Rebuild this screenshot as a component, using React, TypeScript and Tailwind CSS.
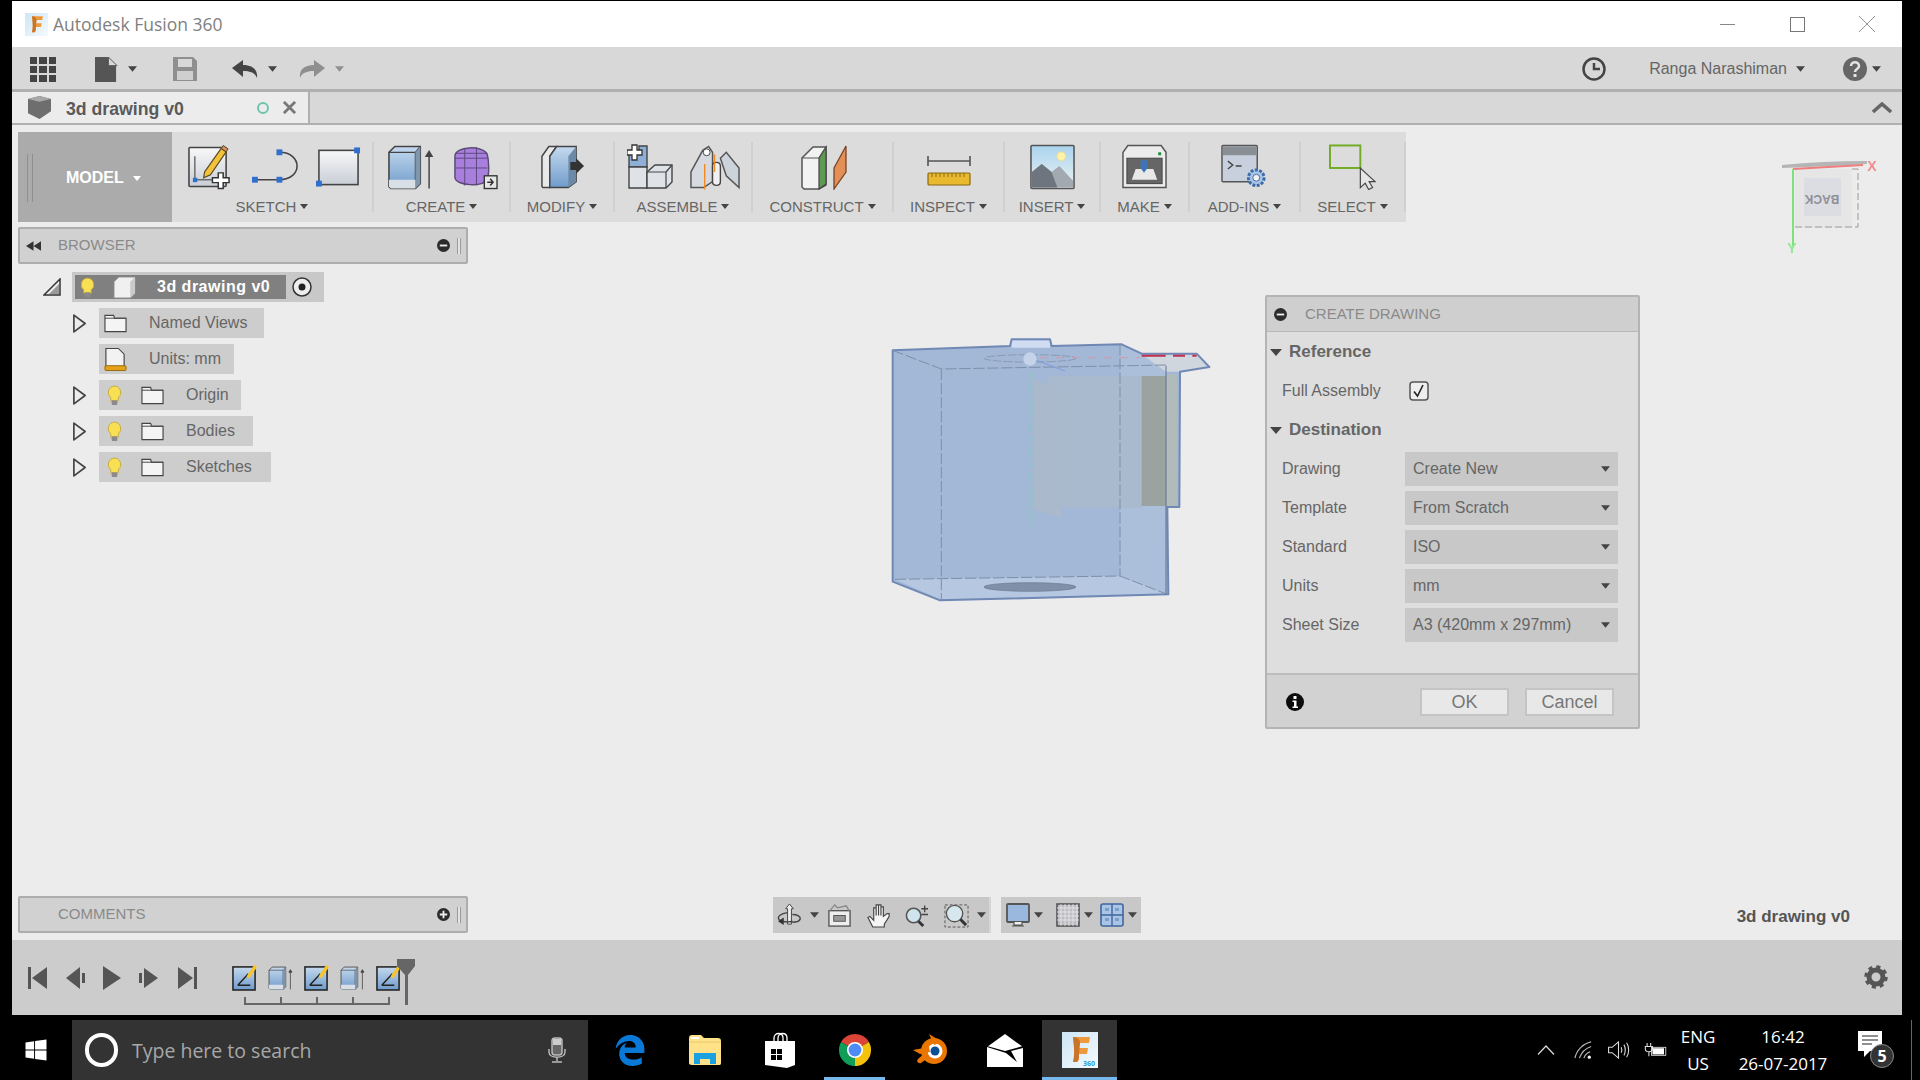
import { FaEdgeLegacy, FaWindows } from "react-icons/fa";

const Caret = ({ className = "w-[9px] h-[6px] text-[#555]" }: { className?: string }) => (
  <svg viewBox="0 0 10 6" className={className}>
    <path d="M0 0h10L5 6z" fill="currentColor" />
  </svg>
);

const Defs = () => (
  <svg className="absolute w-0 h-0">
    <defs>
      <linearGradient id="blue" x1="0" y1="0" x2="0" y2="1">
        <stop offset="0" stopColor="#c5d9ee" />
        <stop offset="1" stopColor="#6f9ccb" />
      </linearGradient>
      <linearGradient id="paper" x1="0" y1="0" x2="0" y2="1">
        <stop offset="0" stopColor="#f8f8f8" />
        <stop offset="1" stopColor="#c9ced6" />
      </linearGradient>
      <linearGradient id="sky" x1="0" y1="0" x2="0" y2="1">
        <stop offset="0" stopColor="#a9d3ee" />
        <stop offset="1" stopColor="#eef3f2" />
      </linearGradient>
      <linearGradient id="fusion" x1="0" y1="0" x2="1" y2="1">
        <stop offset="0" stopColor="#cde6f6" />
        <stop offset="1" stopColor="#f5fafd" />
      </linearGradient>
    </defs>
  </svg>
);

const SketchIcon = () => (
  <svg viewBox="0 0 44 46" className="w-[43px] h-[46px]">
    <rect x="1" y="3" width="38" height="40" rx="1" fill="url(#paper)" stroke="#444" strokeWidth="1.6" />
    <path d="M7 36h26M7 36V12" stroke="#6b6b6b" strokeWidth="1.5" fill="none" />
    <rect x="5" y="34" width="4.5" height="4.5" fill="#2f6fd0" />
    <path d="M17 28 34 4l5 3.5L23 31l-7 3z" fill="#f2c23c" stroke="#5a4a20" strokeWidth="1.2" />
    <path d="m34 4 5 3.5 2-3-5-3.5z" fill="#d98c5f" stroke="#5a4a20" strokeWidth="1" />
    <path d="M31 29h5v5h6v5h-6v6h-5v-6h-6v-5h6z" fill="#fff" stroke="#333" strokeWidth="1.5" />
  </svg>
);

const LineIcon = () => (
  <svg viewBox="0 0 48 46" className="w-[47px] h-[46px]">
    <path d="M3 36h26M28 8c24 0 24 28 0 28" stroke="#444" strokeWidth="1.6" fill="none" />
    <rect x="0" y="33" width="6" height="6" fill="#2f6fd0" />
    <rect x="25" y="33" width="6" height="6" fill="#2f6fd0" />
    <rect x="25" y="5" width="6" height="6" fill="#2f6fd0" />
  </svg>
);

const RectIcon = () => (
  <svg viewBox="0 0 46 46" className="w-[45px] h-[46px]">
    <rect x="3" y="6" width="40" height="35" fill="url(#paper)" stroke="#444" strokeWidth="1.6" />
    <rect x="39" y="3" width="6" height="6" fill="#2f6fd0" />
    <rect x="0" y="37" width="6" height="6" fill="#2f6fd0" />
  </svg>
);

const ExtrudeIcon = ({ small = false }: { small?: boolean }) => (
  <svg viewBox="0 0 48 46" className={small ? "w-[25px] h-[24px]" : "w-[47px] h-[46px]"}>
    <path d="M2 8 8 2h26v38l-5 5H4l-2-2z" fill="url(#blue)" stroke="#444" strokeWidth="1.6" />
    <path d="M29 8h-27M29 8l5-6M29 8v37" stroke="#444" strokeWidth="1.3" fill="none" />
    <path d="M29 8l5-6v38l-5 5z" fill="#7f96ad" />
    <path d="M2 36h27v9H4l-2-2z" fill="#d9dfe6" />
    <path d="M43 45V8M40 12l3-5 3 5z" stroke="#444" strokeWidth="1.5" fill="#444" />
  </svg>
);

const FormIcon = () => (
  <svg viewBox="0 0 46 46" className="w-[45px] h-[46px]">
    <path d="M2 12C2 2 30 0 35 10c2 8 2 20 0 26-5 8-32 6-33-2z" fill="#a87fdc" stroke="#5a4a74" strokeWidth="1.5" />
    <path d="M2 14h33M2 24h33M12 4v38M24 3v39M2 9h33" stroke="#5c4a80" strokeWidth="1" fill="none" />
    <rect x="32" y="32" width="13" height="13" fill="#e6e6e6" stroke="#333" strokeWidth="1.4" />
    <path d="M35 38.500h5M38 35l3 3.500-3 3.500" stroke="#333" strokeWidth="1.5" fill="none" />
  </svg>
);

const ModifyIcon = () => (
  <svg viewBox="0 0 46 46" className="w-[45px] h-[46px]">
    <path d="M2 12 9 2h8l-7 10v32H3l-1-1z" fill="#e8e8e8" stroke="#444" strokeWidth="1.5" />
    <path d="M10 12 17 2h20v36l-8 6H10z" fill="url(#blue)" stroke="#444" strokeWidth="1.5" />
    <path d="M29 12v32l8-6V2z" fill="#6c8aa8" />
    <path d="M31 18h6v-4l8 8-8 8v-4h-6z" fill="#333" />
  </svg>
);

const AssembleIcon = () => (
  <svg viewBox="0 0 46 46" className="w-[46px] h-[46px]">
    <path d="M12 2h8v21H2V10h10z" fill="#8fb0d6" stroke="#444" strokeWidth="1.4" />
    <path d="M2 23h18v21H2z" fill="#dfe3e8" stroke="#444" strokeWidth="1.4" />
    <path d="M20 28l8-7h17v17l-6 6H20z" fill="#dfe3e8" stroke="#444" strokeWidth="1.4" />
    <path d="M20 28h19v16M39 28l6-7" stroke="#444" strokeWidth="1.2" fill="none" />
    <path d="M5 1h5v5h5v5h-5v5H5v-5H0V6h5z" fill="#fff" stroke="#333" strokeWidth="1.3" />
  </svg>
);

const JointIcon = () => (
  <svg viewBox="0 0 52 46" className="w-[51px] h-[46px]">
    <path d="M2 28 14 6l6-4 4 6v30l-9 6H2z" fill="#d6dae0" stroke="#555" strokeWidth="1.5" />
    <circle cx="18" cy="8" r="3.500" fill="#fff" stroke="#444" />
    <path d="M24 22c0-5 8-5 8 0v16c0 5-8 5-8 0z" fill="#f0f0f0" stroke="#444" strokeWidth="1.4" />
    <path d="M32 14 38 8l13 16v20L38 32z" fill="#cdd3da" stroke="#555" strokeWidth="1.5" />
    <path d="M26 10v18M16 20v26" stroke="#f08a24" strokeWidth="1.4" />
  </svg>
);

const ConstructIcon = () => (
  <svg viewBox="0 0 46 46" className="ml-[3px] w-[46px] h-[46px]">
    <path d="M1 14 12 3h13v38l-7 4H3l-2-2z" fill="#f2f2f2" stroke="#555" strokeWidth="1.5" />
    <path d="M18 14v31l7-5V3z" fill="#5f9a55" stroke="#444" strokeWidth="1.2" />
    <path d="M1 14h17l7-11" stroke="#555" strokeWidth="1.2" fill="none" />
    <path d="M33 24 45 2v26L33 45z" fill="#e39058" stroke="#7a4424" strokeWidth="1.3" />
  </svg>
);

const InspectIcon = () => (
  <svg viewBox="0 0 44 46" className="w-[44px] h-[46px]">
    <path d="M1 17h42M1 12v10M43 12v10" stroke="#555" strokeWidth="1.6" fill="none" />
    <rect x="1" y="29" width="42" height="12" rx="1" fill="#e9b92f" stroke="#8a6a14" strokeWidth="1.2" />
    <path d="M5 29v4M9 29v4M13 29v4M17 29v4M21 29v4M25 29v4M29 29v4M33 29v4M37 29v4" stroke="#8a6a14" strokeWidth="1" />
  </svg>
);

const InsertIcon = () => (
  <svg viewBox="0 0 46 46" className="w-[45px] h-[46px]">
    <rect x="1" y="1" width="44" height="44" rx="1" fill="url(#sky)" stroke="#555" strokeWidth="1.6" />
    <circle cx="32" cy="12" r="4.500" fill="#fdf2a8" stroke="#f2dc88" />
    <path d="M2 44V28l10-8 10 8 8-6 14 15v7z" fill="#a3a9b0" />
    <path d="M2 44V28l10-8 10 8 6 16z" fill="#6f757e" />
  </svg>
);

const MakeIcon = () => (
  <svg viewBox="0 0 46 46" className="w-[45px] h-[46px]">
    <path d="M1 8 6 1h34l5 7v36H1z" fill="#ececec" stroke="#555" strokeWidth="1.5" />
    <rect x="5" y="14" width="36" height="26" fill="#666" stroke="#444" />
    <path d="M10 36 14 25h18l4 11z" fill="#e8e8e8" />
    <path d="M19 16h7v8l-3.500 5-3.500-5z" fill="#3f74b8" />
    <rect x="37" y="8" width="3" height="3" fill="#1c8a3a" />
  </svg>
);

const AddinsIcon = () => (
  <svg viewBox="0 0 48 46" className="w-[47px] h-[46px]">
    <rect x="1" y="1" width="36" height="37" rx="1" fill="#c7d0dc" stroke="#555" strokeWidth="1.5" />
    <rect x="2" y="2" width="34" height="9" fill="#8a8f96" />
    <path d="M7 17l5 4-5 4M15 22h6" stroke="#444" strokeWidth="1.4" fill="none" />
    <circle cx="36" cy="34" r="8" fill="#a8c4e6" stroke="#3d6ba8" strokeWidth="3" strokeDasharray="3 1.500" />
    <circle cx="36" cy="34" r="3.500" fill="#f4f4f4" stroke="#3d6ba8" />
  </svg>
);

const SelectIcon = () => (
  <svg viewBox="0 0 48 46" className="w-[47px] h-[46px]">
    <rect x="1" y="1" width="31" height="23" fill="none" stroke="#72ac25" strokeWidth="2" />
    <path d="M32 24v20l5-4.500 3.500 6.500 4-2-3.500-6H47z" fill="#e6e6e6" stroke="#444" strokeWidth="1.2" />
  </svg>
);

const Group = ({ label, className, children }: { label: string; className: string; children: React.ReactNode }) => (
  <div className={`h-[70px] mt-[10px] flex flex-col items-center border-r-2 border-[#d0d0d0] ${className}`}>
    <div className="h-[46px] mt-[2px] flex items-center justify-center">{children}</div>
    <div className="mt-[9px] flex items-center gap-[4px] text-[15px] leading-[15px] text-[#666]">
      {label}
      <Caret className="w-[8px] h-[5px] text-[#444]" />
    </div>
  </div>
);

const Bulb = ({ className = "" }: { className?: string }) => (
  <svg viewBox="0 0 16 22" className={`w-[15px] h-[21px] shrink-0 ${className}`}>
    <path d="M8 1a7 7 0 0 0-4 12.500V17h8v-3.500A7 7 0 0 0 8 1z" fill="#f7e053" stroke="#c7a93a" />
    <rect x="5" y="16" width="6" height="5" rx="1" fill="#8a8a8a" />
  </svg>
);

const Folder = ({ className = "" }: { className?: string }) => (
  <svg viewBox="0 0 24 20" className={`w-[23px] h-[20px] shrink-0 ${className}`}>
    <path d="M1 2h9l1 3h12v14H1z" fill="#f4f4f4" stroke="#444" strokeWidth="1.2" />
    <path d="M1 5h22" stroke="#444" strokeWidth="1" />
  </svg>
);

const TreeArrow = () => (
  <svg viewBox="0 0 16 22" className="w-[15px] h-[21px]">
    <path d="M2 2 14 11 2 20z" fill="none" stroke="#444" strokeWidth="1.8" strokeLinejoin="round" />
  </svg>
);

const CircleSign = ({ plus = false }: { plus?: boolean }) => (
  <svg viewBox="0 0 14 14" className="w-[13px] h-[13px]">
    <circle cx="7" cy="7" r="7" fill="#2c2c2c" />
    <path d={plus ? "M3 7h8M7 3v8" : "M3 7h8"} stroke="#eee" strokeWidth="2" />
  </svg>
);

const Grip = () => (
  <div className="ml-[7px] w-[4px] h-[16px] border-x border-[#9a9a9a] bg-[#e4e4e4]" />
);

const Panel = ({ title, children, right }: { title: string; children?: React.ReactNode; right: React.ReactNode }) => (
  <div className="w-[450px] h-[37px] flex items-center bg-[#d1d1d1] border-2 border-[#adadad] rounded-[2px]">
    <div className="w-[38px] pl-[6px] flex items-center">{children}</div>
    <div className="text-[15px] text-[#8a8a8a]">{title}</div>
    <div className="ml-auto mr-[5px] flex items-center">{right}<Grip /></div>
  </div>
);

const TreeRow = ({ label, arrow = true, bulb = true, doc = false, className }: { label: string; arrow?: boolean; bulb?: boolean; doc?: boolean; className: string }) => (
  <div className="flex items-center h-[30px] ml-[54px]">
    <div className="w-[27px]">{arrow && <TreeArrow />}</div>
    <div className={`h-[30px] flex items-center bg-[#cdcdcd] text-[16px] text-[#666] ${className}`}>
      {bulb && <Bulb className="ml-[8px] mr-[19px]" />}
      {doc ? (
        <svg viewBox="0 0 24 24" className="w-[23px] h-[24px] ml-[5px] shrink-0">
          <path d="M2 20V1h13l6 6v13z" fill="#f2f2f2" stroke="#444" strokeWidth="1.2" />
          <rect x="1" y="19" width="22" height="5" rx="1" fill="#e3a21a" stroke="#96680c" />
        </svg>
      ) : (
        <Folder className={bulb ? "" : "ml-[5px]"} />
      )}
      <span className="ml-[22px]">{label}</span>
    </div>
  </div>
);

const Field = ({ label, value }: { label: string; value: string }) => (
  <div className="flex items-center h-[34px] mb-[5px]">
    <div className="w-[138px] pl-[15px] text-[16px] text-[#666]">{label}</div>
    <div className="w-[213px] h-[34px] pl-[8px] pr-[8px] flex items-center justify-between bg-[#c8c8c8] text-[16px] text-[#666]">
      {value}
      <Caret className="w-[9px] h-[6px] text-[#444]" />
    </div>
  </div>
);

const SectionTitle = ({ label }: { label: string }) => (
  <div className="flex items-center h-[22px] pl-[3px] gap-[7px] text-[17px] font-bold text-[#666]">
    <Caret className="w-[12px] h-[9px] text-[#444]" />
    {label}
  </div>
);

const Model = () => (
  <svg viewBox="0 0 1110 900" className="absolute left-[848px] top-[186px] w-[370px] h-[300px] blur-[0.4px]">
    <path d="M98 118 450 105 455 85H570L575 105 785 100 845 128H1010L1048 168 960 182 958 588H922L925 850 240 868 98 812Z" fill="#a3b8d6" />
    <path d="M780 100 918 165V850L780 795Z" fill="#abbfdb" />
    <path d="M105 805 780 795 922 850 240 865Z" fill="#b6c8e1" />
    <path d="M455 88H570V110H455Z" fill="#cfdcf2" />
    <path d="M845 130H1010L1048 168 960 182H918Z" fill="#cfd6de" />
    <path d="M565 195H845V590H565Z" fill="#a9bacf" />
    <path d="M520 205 605 235V622L520 595Z" fill="#aabacc" />
    <path d="M845 195H918V585H845Z" fill="#9aa3a0" />
    <path d="M918 190H952V585H918Z" fill="#b2bbbb" />
    <path d="M98 118 450 105 455 85H570L575 105 785 100 845 128H1010L1048 168 960 182 958 588H922L925 850 240 868 98 812Z" fill="none" stroke="#7088b4" strokeWidth="6" strokeLinejoin="round" />
    <path d="M98 118 244 174 918 162M244 174V865M780 100V795M105 805 780 795 922 850" fill="none" stroke="#7d8fa8" strokeWidth="3" strokeDasharray="34 8" />
    <path d="M918 165V850" stroke="#5f7190" strokeWidth="3" />
    <path d="M512 180V645" stroke="#8dc4bd" strokeWidth="3" strokeDasharray="30 8" />
    <ellipse cx="510" cy="142" rx="138" ry="11" fill="none" stroke="#8493ab" strokeWidth="2.500" strokeDasharray="26 6" />
    <circle cx="510" cy="144" r="20" fill="#c4d2ea" />
    <path d="M530 148 615 180" stroke="#7f9ce0" strokeWidth="3" />
    <path d="M540 140H840" stroke="#d39aa8" strokeWidth="3" strokeDasharray="24 24" />
    <path d="M845 134H1010" stroke="#c0304f" strokeWidth="6" strokeDasharray="72 22 36 22" />
    <ellipse cx="510" cy="828" rx="138" ry="13" fill="#7f90a8" stroke="#66758e" strokeWidth="2" />
  </svg>
);

const ViewCube = () => (
  <svg viewBox="0 0 420 270" className="absolute left-[1488px] top-[-124px] w-[420px] h-[270px] blur-[0.5px]">
    <path d="M282 164q40-4 85-4v3q-30 2-85 4z" fill="#b5b5b5" />
    <rect x="295" y="168" width="57" height="59" fill="#e6e6e6" />
    <rect x="304" y="177" width="37" height="38" fill="#dcdde2" />
    <text x="322" y="197" transform="rotate(180 322 197)" textAnchor="middle" dominantBaseline="middle" fontSize="12" fontWeight="700" fill="#8f8f96">BACK</text>
    <path d="M352 168h6v58h-64" fill="none" stroke="#9a9a9a" strokeWidth="1" strokeDasharray="7 3" />
    <path d="M293 168 363 164" stroke="#ef7e7e" strokeWidth="2" />
    <path d="M293 168V245" stroke="#7fe07f" strokeWidth="2" />
    <text x="372" y="170" textAnchor="middle" fontSize="14" fontWeight="700" fill="#f28b8b">X</text>
    <text x="292" y="252" textAnchor="middle" fontSize="14" fontWeight="700" fill="#93e893">Y</text>
  </svg>
);

const NavBar = () => (
  <div className="absolute left-[761px] top-[772px] flex items-center h-[36px] gap-[10px]">
    <div className="w-[218px] h-[36px] bg-[#c8c8c8] flex items-center pl-[4px] border-r-2 border-[#d6d6d6]">
      <svg viewBox="0 0 26 26" className="w-[25px] h-[25px]">
        <path d="M13 1 9 6h2v16h4V6h2z" fill="#eee" stroke="#444" />
        <path d="M11 10C4 11 0 14 2 17s10 3 14 2M16 12c5 0 9 2 8 5-1 2-5 3-8 3" fill="none" stroke="#444" strokeWidth="1.400" />
        <path d="m1 19 6-4v8z" fill="#333" />
      </svg>
      <Caret className="ml-[8px] w-[9px] h-[6px] text-[#444]" />
      <svg viewBox="0 0 26 26" className="ml-[8px] w-[25px] h-[25px]">
        <rect x="2" y="8" width="22" height="16" fill="#eee" stroke="#555" strokeWidth="1.400" />
        <rect x="7" y="13" width="12" height="6" fill="#999" stroke="#555" />
        <path d="M3 8 8 2l3 3 9-2 3 5" fill="none" stroke="#888" strokeWidth="1.400" />
      </svg>
      <svg viewBox="0 0 26 26" className="ml-[15px] w-[25px] h-[25px]">
        <path d="M6 25 1 15l2-1 4 4V5h2.500v8V2H12v11V2h2.500v11V4H17v10l4-3h2v3l-5 8v3z" fill="#f4f4f4" stroke="#444" strokeWidth="1.200" />
      </svg>
      <svg viewBox="0 0 26 26" className="ml-[12px] w-[25px] h-[25px]">
        <circle cx="10" cy="13" r="7.500" fill="#cfe4ec" stroke="#555" strokeWidth="1.600" />
        <path d="m15 19 5 5" stroke="#333" strokeWidth="3" />
        <path d="M18 6h7M21.500 2.500v7M18 12h7" stroke="#444" strokeWidth="1.400" />
      </svg>
      <svg viewBox="0 0 26 26" className="ml-[15px] w-[25px] h-[25px]">
        <rect x="1" y="2" width="24" height="23" fill="none" stroke="#555" strokeDasharray="3 2" />
        <circle cx="11" cy="11" r="8.500" fill="#d6e8ee" stroke="#555" strokeWidth="1.400" />
        <path d="m17 17 6 6" stroke="#333" strokeWidth="3" />
      </svg>
      <Caret className="ml-[8px] w-[9px] h-[6px] text-[#444]" />
    </div>
    <div className="w-[140px] h-[36px] bg-[#c8c8c8] flex items-center pl-[5px]">
      <svg viewBox="0 0 24 24" className="w-[24px] h-[24px]">
        <rect x="1" y="1" width="22" height="18" rx="1" fill="#9ab8de" stroke="#555" strokeWidth="1.800" />
        <path d="M8 19v3h8v-3M6 23h12" fill="#eee" stroke="#555" strokeWidth="1.200" />
      </svg>
      <Caret className="ml-[4px] w-[9px] h-[6px] text-[#444]" />
      <svg viewBox="0 0 24 24" className="ml-[13px] w-[24px] h-[24px]">
        <rect x="1" y="1" width="22" height="22" fill="#bdbdc4" stroke="#555" strokeWidth="1.600" />
        <path d="M5 1v22M9 1v22M13 1v22M17 1v22M21 1v22M1 5h22M1 9h22M1 13h22M1 17h22" stroke="#ececec" strokeWidth="0.800" />
      </svg>
      <Caret className="ml-[4px] w-[9px] h-[6px] text-[#444]" />
      <svg viewBox="0 0 24 24" className="ml-[7px] w-[24px] h-[24px]">
        <rect x="1" y="1" width="22" height="22" rx="2" fill="#aac4e6" stroke="#3f66a0" strokeWidth="1.600" />
        <path d="M12 1v22M1 12h22" stroke="#3f66a0" strokeWidth="1.400" />
        <path d="M5 5h4v3H5zM15 5h4v3h-4zM5 15h4v3H5zM15 15h4v3h-4z" fill="#7f9fcb" />
      </svg>
      <Caret className="ml-[4px] w-[9px] h-[6px] text-[#444]" />
    </div>
  </div>
);

const Dialog = () => (
  <div className="absolute left-[1253px] top-[170px] w-[375px] h-[434px] flex flex-col bg-[#dedede] border-2 border-[#b4b4b4] rounded-[2px]">
    <div className="h-[35px] shrink-0 flex items-center pl-[7px] gap-[18px] bg-[#cfcfcf] border-b border-[#b8b8b8] text-[15px] text-[#8a8a8a]">
      <CircleSign />
      CREATE DRAWING
    </div>
    <div className="flex-1 pt-[9px]">
      <SectionTitle label="Reference" />
      <div className="flex items-center h-[34px] mt-[11px] mb-[11px]">
        <div className="w-[144px] pl-[15px] text-[16px] text-[#666] whitespace-nowrap">Full Assembly</div>
        <svg viewBox="0 0 20 20" className="ml-[-2px] w-[20px] h-[20px]">
          <rect x="1" y="1" width="18" height="18" rx="3" fill="#eee" stroke="#555" strokeWidth="1.500" />
          <path d="M5 10.500 8.500 15 14 4" fill="none" stroke="#222" strokeWidth="1.600" />
        </svg>
      </div>
      <SectionTitle label="Destination" />
      <div className="mt-[11px]">
        <Field label="Drawing" value="Create New" />
        <Field label="Template" value="From Scratch" />
        <Field label="Standard" value="ISO" />
        <Field label="Units" value="mm" />
        <Field label="Sheet Size" value="A3 (420mm x 297mm)" />
      </div>
    </div>
    <div className="h-[54px] shrink-0 flex items-center bg-[#d2d2d2] border-t-2 border-[#bdbdbd] pt-[2px] pl-[19px] pr-[24px]">
      <svg viewBox="0 0 18 18" className="w-[18px] h-[18px]">
        <circle cx="9" cy="9" r="9" fill="#0c0c0c" />
        <rect x="7.500" y="3" width="3" height="3" fill="#fff" />
        <path d="M6.500 7.500h4v6h1.500v1.500H6.500v-1.500H8V9H6.500z" fill="#fff" />
      </svg>
      <div className="ml-auto w-[89px] h-[28px] flex items-center justify-center bg-[#e8e8e8] border-2 border-[#c4c4c4] text-[18px] text-[#777]">OK</div>
      <div className="ml-[16px] w-[89px] h-[28px] flex items-center justify-center bg-[#e8e8e8] border-2 border-[#c4c4c4] text-[18px] text-[#777]">Cancel</div>
    </div>
  </div>
);

const TimelineSketch = () => (
  <svg viewBox="0 0 26 28" className="w-[25px] h-[27px]">
    <rect x="1" y="3" width="23" height="24" fill="url(#blue)" stroke="#222" strokeWidth="1.600" />
    <path d="M6 22h13M6 22 17 10" stroke="#222" strokeWidth="1.500" fill="none" />
    <path d="M15 13 23 1l3 2-8 12z" fill="#f5c52e" />
  </svg>
);

const Transport = ({ d }: { d: string }) => (
  <svg viewBox="0 0 20 26" className="w-[20px] h-[26px]">
    <path d={d} fill="#555" />
  </svg>
);

const Timeline = () => (
  <div className="h-[75px] shrink-0 bg-[#cccccc] flex items-center pl-[16px] pr-[14px]">
    <Transport d="M0 2h3v22H0zM19 2v22L4 13z" />
    <div className="ml-[17px]"><Transport d="M15 2v22L1 13zM17 8h3v10h-3z" /></div>
    <div className="ml-[17px]"><Transport d="M1 1v24L19 13z" /></div>
    <div className="ml-[17px]"><Transport d="M5 3v20L19 13zM0 8h3v10H0z" /></div>
    <div className="ml-[18px]"><Transport d="M1 2v22L16 13zM17 2h3v22h-3z" /></div>
    <div className="ml-[35px] relative flex items-center gap-[11px] w-[180px] h-[60px]">
      <TimelineSketch />
      <ExtrudeIcon small />
      <TimelineSketch />
      <ExtrudeIcon small />
      <TimelineSketch />
      <svg viewBox="0 0 190 50" className="absolute left-[0px] top-[8px] w-[190px] h-[50px]">
        <path d="M13 41v7h144v-7M49 41v7M85 41v7M121 41v7" fill="none" stroke="#666" strokeWidth="2" />
        <path d="M165 3h18v7l-7 9v30h-3V19l-8-9z" fill="#666" />
      </svg>
    </div>
    <svg viewBox="0 0 24 24" className="ml-auto w-[24px] h-[24px] mt-[-2px]">
      <circle cx="12" cy="12" r="7" fill="none" stroke="#555" strokeWidth="5" />
      <circle cx="12" cy="12" r="10" fill="none" stroke="#555" strokeWidth="3.500" strokeDasharray="4 3.850" />
    </svg>
  </div>
);

const FusionTile = ({ className, badge = false }: { className: string; badge?: boolean }) => (
  <svg viewBox="0 0 36 36" className={className}>
    <rect width="36" height="36" fill="url(#fusion)" />
    <path d="M11 5h17l-1 6H18l-1 5h9l-1 6h-8c0 5 0 6-2 8h-4c2-6 1-17 0-25z" fill="#ee9a3c" />
    <path d="M11 5c3 0 7 1 7 6l-1 11c0 4 0 6-2 8h-4c2-6 1-17 0-25z" fill="#c8752a" />
    {badge && <text x="33" y="34" textAnchor="end" fontSize="7" fontWeight="700" fill="#2b9be0">360</text>}
  </svg>
);

const TaskCell = ({ children, active = false, open = false }: { children: React.ReactNode; active?: boolean; open?: boolean }) => (
  <div className={`relative w-[75px] h-[60px] flex items-center justify-center ${active ? "bg-[#333333]" : ""}`}>
    {children}
    {(active || open) && <div className={`absolute bottom-0 h-[3px] bg-[#76b9ed] ${active ? "inset-x-0" : "inset-x-[7px]"}`} />}
  </div>
);

const Taskbar = () => (
  <div className="h-[60px] flex items-center bg-black text-white relative font-['Open_Sans',sans-serif]">
    <div className="w-[72px] flex justify-center">
      <FaWindows className="w-[24px] h-[24px] text-white" />
    </div>
    <div className="w-[516px] h-[60px] bg-[#333333] flex items-center pl-[13px] pr-[22px]">
      <div className="w-[33px] h-[34px] rounded-full border-[4px] border-white" />
      <span className="ml-[14px] mt-[1px] text-[19.5px] text-[#a8a8a8]">Type here to search</span>
      <svg viewBox="0 0 18 26" className="ml-auto w-[18px] h-[26px]">
        <rect x="4" y="1" width="10" height="17" rx="3" fill="#666" stroke="#bbb" strokeWidth="1.500" />
        <rect x="5" y="2" width="8" height="6" fill="#ccc" />
        <path d="M1 12v3c0 7 16 7 16 0v-3M9 21v3M4 25h10" fill="none" stroke="#bbb" strokeWidth="1.500" />
      </svg>
    </div>
    <div className="ml-[4px] flex">
      <TaskCell>
        <FaEdgeLegacy className="w-[32px] h-[33px] text-[#0a78d6]" />
      </TaskCell>
      <TaskCell>
        <svg viewBox="0 0 32 32" className="w-[32px] h-[32px]">
          <path d="M0 4c0-2 1-3 3-3h9l3 3h14c2 0 3 1 3 3v22c0 2-1 2-3 2H3c-2 0-3-1-3-2z" fill="#ffe28a" />
          <path d="M0 8h32" stroke="#e8c86a" />
          <path d="M2 3h8v2H2z" fill="#fff" />
          <path d="M5 30V19h22v11h-6v-5H11v5z" fill="#1ba1e2" />
        </svg>
      </TaskCell>
      <TaskCell>
        <svg viewBox="0 0 32 36" className="w-[32px] h-[36px]">
          <path d="M1 9h30v24l-8 3-22-3z" fill="#fff" />
          <path d="M10 10V6c0-6 9-6 9 0v4M14 10V6c0-6 9-6 9 0v4" fill="none" stroke="#fff" strokeWidth="1.300" />
          <path d="M7 17h5v5H7zM13 17h5v5h-5zM7 23h5v5H7zM13 23h5v5h-5z" fill="#000" />
        </svg>
      </TaskCell>
      <TaskCell open>
        <svg viewBox="0 0 36 36" className="w-[34px] h-[34px]">
          <path d="M3.300 9.500a17 17 0 0 1 29.400 0L18 18z" fill="#db4437" />
          <path d="M32.700 9.500A17 17 0 0 1 18 35l0-17z" fill="#f4c20d" />
          <path d="M18 35A17 17 0 0 1 3.300 9.500L18 18z" fill="#0f9d58" />
          <circle cx="18" cy="18" r="8.500" fill="#fff" />
          <circle cx="18" cy="18" r="6.800" fill="#4d8cf5" />
        </svg>
      </TaskCell>
      <TaskCell>
        <svg viewBox="0 0 36 34" className="w-[36px] h-[34px]">
          <circle cx="22" cy="18" r="13" fill="#ea7600" />
          <circle cx="23" cy="18" r="7.500" fill="#fff" />
          <circle cx="23" cy="18" r="4.500" fill="#0a4f96" />
          <path d="M17 1l13 8-8 3zM1 17l16-3 1 5-10 2zM6 26l8-7 3 5-8 6c-3 1-5-2-3-4z" fill="#ea7600" />
        </svg>
      </TaskCell>
      <TaskCell>
        <svg viewBox="0 0 36 34" className="w-[36px] h-[34px]">
          <path d="M18 1 36 14v20H0V14z" fill="#fff" />
          <path d="M0 13 18 18 36 13v2L24 18l6 11-11-9-19-6z" fill="#000" />
        </svg>
      </TaskCell>
      <TaskCell active>
        <FusionTile badge className="w-[36px] h-[36px]" />
      </TaskCell>
    </div>
    <div className="ml-auto flex items-center h-[60px] pr-[8px] text-[17px]">
      <svg viewBox="0 0 18 10" className="w-[18px] h-[10px]">
        <path d="M1 9.500 9 1l8 8.500" fill="none" stroke="#ddd" strokeWidth="1.200" />
      </svg>
      <svg viewBox="0 0 20 20" className="ml-[18px] w-[20px] h-[18px]">
        <path d="M1 19C3 10 10 3 19 1M6 19C8 13 13 8 19 6M11 19c1-3 4-6 7-7" fill="none" stroke="#bbb" strokeWidth="1.200" />
        <circle cx="17" cy="18" r="1.800" fill="#fff" />
      </svg>
      <svg viewBox="0 0 24 20" className="ml-[14px] w-[23px] h-[18px]">
        <path d="M1 7h4l7-6v18l-7-6H1z" fill="none" stroke="#ddd" strokeWidth="1.200" />
        <path d="M15 7c1 2 1 4 0 6M18 4c2 3 2 9 0 12M21 2c3 4 3 12 0 16" fill="none" stroke="#ddd" strokeWidth="1.200" />
      </svg>
      <svg viewBox="0 0 24 18" className="ml-[14px] w-[24px] h-[16px]">
        <path d="M2 1v4M6 1v4M0 5h8v3c0 2-2 3-4 3s-4-1-4-3zM4 11v5" fill="none" stroke="#ddd" strokeWidth="1.200" />
        <rect x="7" y="6" width="16" height="9" fill="none" stroke="#ddd" />
        <rect x="8" y="7" width="13" height="7" fill="#fff" />
      </svg>
      <div className="ml-[12px] w-[36px] flex flex-col items-center leading-[27px]">
        <span>ENG</span>
        <span>US</span>
      </div>
      <div className="ml-[18px] w-[98px] flex flex-col items-center leading-[27px]">
        <span>16:42</span>
        <span className="whitespace-nowrap">26-07-2017</span>
      </div>
      <div className="relative ml-[26px] w-[36px] h-[44px]">
        <svg viewBox="0 0 26 26" className="absolute left-0 top-[3px] w-[26px] h-[26px]">
          <path d="M0 0h24v20h-12l-6 6v-6H0z" fill="#fff" />
          <path d="M4 5h16M4 9h16M4 13h10" stroke="#222" strokeWidth="1.200" />
        </svg>
        <div className="absolute left-[12px] top-[16px] w-[24px] h-[24px] rounded-full bg-[#333] border border-[#888] flex items-center justify-center text-[16px] font-bold text-white">5</div>
      </div>
      <div className="ml-[17px] w-[1px] h-[60px] bg-[#666]" />
    </div>
  </div>
);

export default function App() {
  return (
    <div className="w-[1920px] h-[1080px] overflow-hidden bg-black font-['Liberation_Sans',Arial,sans-serif]">
      <Defs />
      <div className="ml-[12px] mt-[1px] w-[1890px] h-[1014px] flex flex-col">
        <div className="h-[46px] shrink-0 bg-white flex items-center pl-[13px]">
          <FusionTile className="w-[23px] h-[23px]" />
          <span className="ml-[5px] text-[17.5px] text-[#808080] font-['Open_Sans',sans-serif]">Autodesk Fusion 360</span>
          <div className="ml-auto flex">
            <div className="w-[70px] flex justify-center items-center"><div className="w-[15px] h-px bg-[#888]" /></div>
            <div className="w-[70px] flex justify-center items-center"><div className="w-[15px] h-[15px] border border-[#777]" /></div>
            <div className="w-[70px] flex justify-center items-center">
              <svg viewBox="0 0 16 16" className="w-[16px] h-[16px]"><path d="M0 0l16 16M16 0 0 16" stroke="#777" strokeWidth="0.800" /></svg>
            </div>
          </div>
        </div>
        <div className="h-[45px] shrink-0 bg-[#d8d8d8] border-b-[3px] border-[#b0b0b0] flex items-center pt-[2px]">
          <div className="ml-[18px] grid grid-cols-3 gap-[2px] w-[26px] h-[25px]">
            {Array.from({ length: 9 }).map((_, i) => <div key={i} className="bg-[#444]" />)}
          </div>
          <svg viewBox="0 0 24 26" className="ml-[39px] w-[23px] h-[25px]">
            <path d="M0 0h13l9 9v17H0z" fill="#555" />
            <path d="M14 0l9 9h-9z" fill="#d8d8d8" stroke="#555" />
          </svg>
          <Caret className="ml-[10px] w-[9px] h-[6px] text-[#444]" />
          <svg viewBox="0 0 24 24" className="ml-[36px] w-[24px] h-[24px]">
            <path d="M0 0h20l4 4v20H0z" fill="#8f8f8f" />
            <rect x="5" y="2" width="14" height="8" fill="#d8d8d8" />
            <rect x="4" y="14" width="16" height="9" fill="#cfcfcf" />
          </svg>
          <svg viewBox="0 0 26 18" className="ml-[35px] w-[26px] h-[18px]">
            <path d="M11 0v5c10 0 15 5 14 13-2-5-6-7-14-7v6L0 8z" fill="#444" />
          </svg>
          <Caret className="ml-[10px] w-[9px] h-[6px] text-[#444]" />
          <svg viewBox="0 0 26 18" className="ml-[22px] w-[26px] h-[18px]">
            <path d="M15 0v5C5 5 0 10 1 18c2-5 6-7 14-7v6L26 8z" fill="#8f8f8f" />
          </svg>
          <Caret className="ml-[10px] w-[9px] h-[6px] text-[#8f8f8f]" />
          <div className="ml-auto flex items-center text-[16px] text-[#666]">
            <svg viewBox="0 0 24 24" className="w-[24px] h-[24px]">
              <circle cx="12" cy="12" r="10.500" fill="none" stroke="#444" strokeWidth="2.500" />
              <path d="M12 6v6h6" fill="none" stroke="#444" strokeWidth="2.500" />
            </svg>
            <span className="ml-[43px]">Ranga Narashiman</span>
            <Caret className="ml-[9px] w-[9px] h-[6px] text-[#444]" />
            <svg viewBox="0 0 24 24" className="ml-[38px] w-[24px] h-[24px]">
              <circle cx="12" cy="12" r="12" fill="#666" />
              <path d="M8 9c0-5 8-5 8 0 0 3-4 3-4 6" fill="none" stroke="#e4e4e4" strokeWidth="2.500" />
              <rect x="10.500" y="17" width="3" height="3" fill="#e4e4e4" />
            </svg>
            <Caret className="ml-[5px] mr-[21px] w-[9px] h-[6px] text-[#444]" />
          </div>
        </div>
        <div className="h-[33px] shrink-0 bg-[#d8d8d8] border-b-2 border-[#b0b0b0] flex items-center">
          <div className="w-[298px] h-[31px] bg-[#ececec] border-r-2 border-[#b0b0b0] flex items-center pl-[15px]">
            <svg viewBox="0 0 26 24" className="w-[25px] h-[23px]">
              <path d="M1 3 13 0l12 3v13l-12 8-12-6z" fill="#6e6e6e" />
              <path d="M1 3 13 6l12-3-12-3z" fill="#a8a8a8" />
            </svg>
            <span className="ml-[14px] mt-[4px] text-[17.7px] font-bold text-[#5a5a5a]">3d drawing v0</span>
            <div className="ml-auto w-[12px] h-[12px] rounded-full border-2 border-[#6fc4ae]" />
            <svg viewBox="0 0 14 14" className="ml-[14px] mr-[12px] w-[13px] h-[13px]">
              <path d="M1 1l12 12M13 1 1 13" stroke="#777" strokeWidth="3" />
            </svg>
          </div>
          <svg viewBox="0 0 20 12" className="ml-auto mr-[10px] w-[20px] h-[12px]">
            <path d="M1 10 10 2l9 8" fill="none" stroke="#666" strokeWidth="3.500" />
          </svg>
        </div>
        <div className="relative flex-1 bg-[#ececec] flex flex-col pl-[6px] pt-[7px] pb-[7px]">
          <div className="w-[1388px] h-[90px] shrink-0 flex bg-[#dcdcdc]">
            <div className="w-[154px] h-[90px] bg-[#ababab] flex items-center pt-[2px] text-[16px] font-bold text-white">
              <div className="ml-[9px] w-[6px] h-[48px] border-x border-[#8f8f8f]" />
              <span className="ml-[33px]">MODEL</span>
              <Caret className="ml-[9px] w-[8px] h-[5px] text-white" />
            </div>
            <Group label="SKETCH" className="w-[202px]">
              <div className="w-[4px]" />
              <SketchIcon />
              <div className="w-[21px]" />
              <LineIcon />
              <div className="w-[17px]" />
              <RectIcon />
            </Group>
            <Group label="CREATE" className="w-[137px]">
              <div className="w-[2px]" />
              <ExtrudeIcon />
              <div className="w-[19px]" />
              <FormIcon />
            </Group>
            <Group label="MODIFY" className="w-[104px]"><ModifyIcon /></Group>
            <Group label="ASSEMBLE" className="w-[138px]">
              <AssembleIcon />
              <div className="w-[16px]" />
              <JointIcon />
            </Group>
            <Group label="CONSTRUCT" className="w-[141px]"><ConstructIcon /></Group>
            <Group label="INSPECT" className="w-[111px]"><InspectIcon /></Group>
            <Group label="INSERT" className="w-[96px]"><InsertIcon /></Group>
            <Group label="MAKE" className="w-[89px]"><MakeIcon /></Group>
            <Group label="ADD-INS" className="w-[111px]"><AddinsIcon /></Group>
            <Group label="SELECT" className="w-[105px] border-r-0"><SelectIcon /></Group>
          </div>
          <div className="mt-[5px]">
            <Panel
              title="BROWSER"
              right={<CircleSign />}
            >
              <svg viewBox="0 0 16 10" className="w-[15px] h-[10px]">
                <path d="M8 0v10L0 5zM16 0v10L8 5z" fill="#333" />
              </svg>
            </Panel>
          </div>
          <div className="mt-[8px] flex flex-col gap-[6px]">
            <div className="flex items-center h-[30px] ml-[25px]">
              <svg viewBox="0 0 18 18" className="w-[18px] h-[18px]">
                <path d="M1 17 17 1v16z" fill="none" stroke="#333" strokeWidth="1.500" />
                <path d="M6 16 16 6v10z" fill="#9a9a9a" />
              </svg>
              <div className="ml-[11px] w-[252px] h-[30px] bg-[#c8c8c8] flex items-center">
                <div className="ml-[3px] w-[211px] h-[24px] bg-[#808080] flex items-center text-[16px] font-bold text-white tracking-[0.5px]">
                  <Bulb className="ml-[5px] h-[20px]" />
                  <svg viewBox="0 0 24 24" className="ml-[18px] w-[23px] h-[23px]">
                    <path d="M1 6 6 1h17v17l-5 5H1z" fill="#f0f0f0" stroke="#888" />
                    <path d="M18 6v17l5-5V1z" fill="#c9c9c9" />
                  </svg>
                  <span className="ml-[21px] whitespace-nowrap">3d drawing v0</span>
                </div>
                <svg viewBox="0 0 20 20" className="ml-[6px] w-[20px] h-[20px]">
                  <circle cx="10" cy="10" r="9" fill="#eee" stroke="#333" strokeWidth="1.500" />
                  <circle cx="10" cy="10" r="3.500" fill="#222" />
                </svg>
              </div>
            </div>
            <TreeRow label="Named Views" bulb={false} className="w-[165px]" />
            <TreeRow label="Units: mm" arrow={false} bulb={false} doc className="w-[135px]" />
            <TreeRow label="Origin" className="w-[142px]" />
            <TreeRow label="Bodies" className="w-[154px]" />
            <TreeRow label="Sketches" className="w-[172px]" />
          </div>
          <div className="mt-auto">
            <Panel title="COMMENTS" right={<CircleSign plus />} />
          </div>
          <Model />
          <ViewCube />
          <NavBar />
          <Dialog />
          <div className="absolute right-[52px] top-[779px] text-[17px] font-bold text-[#555]">3d drawing v0</div>
        </div>
        <Timeline />
      </div>
      <div className="mt-[5px]">
        <Taskbar />
      </div>
    </div>
  );
}
